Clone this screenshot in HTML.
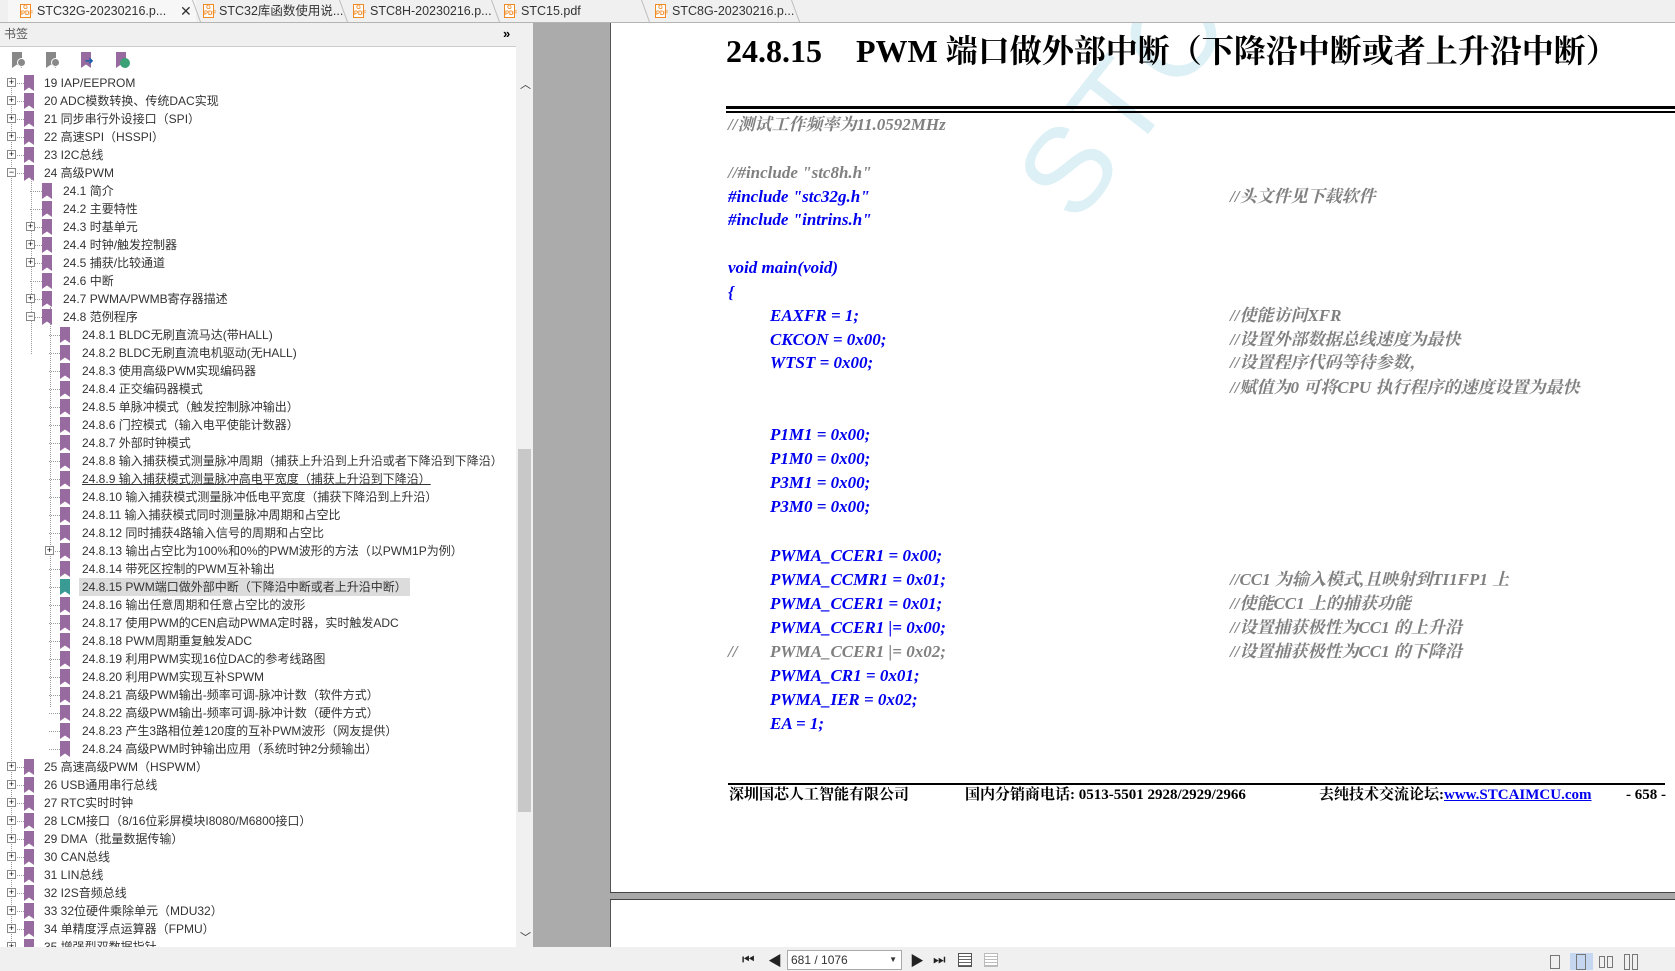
<!DOCTYPE html>
<html><head><meta charset="utf-8"><style>
*{margin:0;padding:0;box-sizing:border-box}
body{width:1675px;height:970px;overflow:hidden;background:#f0f0f0;position:relative;font-family:"Liberation Sans","Noto Sans CJK SC",sans-serif}
.abs{position:absolute}
.tabs{left:0;top:0;width:1675px;height:23px;background:#f0f0f0;border-bottom:1px solid #b4b4b4}
.tab{position:absolute;top:0;height:22px;font-size:12.5px;color:#333;line-height:22px;white-space:nowrap}
.pdf{position:absolute;top:4px;width:11px;height:14px;border:1px solid #f08a24;background:#fff;font-size:6px;color:#f08a24;line-height:6px;text-align:center;font-weight:bold}
.sep{position:absolute;top:0;width:1px;height:22px;background:#bbb;transform:skewX(20deg)}
.hdr{left:0;top:23px;width:516px;height:24px;background:#f0f0f0;border-bottom:1px solid #ccc;font-size:12px;color:#555;line-height:22px;padding-left:4px}
.tree{left:0;top:47px;width:516px;height:900px;background:#fff;overflow:hidden}
.row{position:absolute;height:18px;font-size:12px;line-height:18px;color:#333;white-space:nowrap}
.bm{position:absolute;width:10px;height:16px;background:#976b9f;clip-path:polygon(0 0,100% 0,100% 100%,50% 78%,0 100%)}
.box{position:absolute;width:9px;height:9px;border:1px solid #888;background:#fff;font-size:9px;line-height:7px;text-align:center;color:#000}
.vl{position:absolute;border-left:1px dotted #999;width:0}
.hl{position:absolute;border-top:1px dotted #999;height:0}
.page{left:610px;top:23px;width:1065px;height:869px;background:#fff;border-left:1px solid #555;overflow:hidden}
.code{position:absolute;font-family:"Liberation Serif","Noto Serif CJK SC",serif;font-weight:bold;font-style:italic;font-size:17px;color:#0000ee;white-space:nowrap;line-height:20px}
.cm{color:#808080}
</style></head><body>

<div class="abs tabs">
 <div class="tab" style="left:8px;width:188px;background:#f7f7f7"><div class="pdf" style="left:12px">G<br>PDF</div><span style="position:absolute;left:29px">STC32G-20230216.p...</span><span style="position:absolute;left:172px;font-size:14px">✕</span></div>
 <div class="sep" style="left:196px"></div>
 <div class="tab" style="left:200px"><div class="pdf" style="left:3px">G<br>PDF</div><span style="position:absolute;left:19px">STC32库函数使用说...</span></div>
 <div class="sep" style="left:343px"></div>
 <div class="tab" style="left:350px"><div class="pdf" style="left:3px">G<br>PDF</div><span style="position:absolute;left:20px">STC8H-20230216.p...</span></div>
 <div class="sep" style="left:495px"></div>
 <div class="tab" style="left:501px"><div class="pdf" style="left:3px">G<br>PDF</div><span style="position:absolute;left:20px">STC15.pdf</span></div>
 <div class="sep" style="left:645px"></div>
 <div class="tab" style="left:652px"><div class="pdf" style="left:3px">G<br>PDF</div><span style="position:absolute;left:20px">STC8G-20230216.p...</span></div>
 <div class="sep" style="left:795px"></div>
</div>

<div class="abs hdr">书签<span style="position:absolute;left:503px;top:0;font-size:13px;color:#000;font-weight:bold">»</span><span style="position:absolute;left:521px;font-size:9px;color:#000">◀</span></div>
<div class="abs" style="left:516px;top:23px;width:17px;height:24px;background:#f0f0f0"></div>

<div class="abs tree">
 <div class="bm" style="left:12px;top:5px;background:#888"></div><div class="abs" style="left:17px;top:11px;width:9px;height:9px;border-radius:50%;background:#888;border:1px solid #fff"></div>
 <div class="bm" style="left:46px;top:5px;background:#888"></div><div class="abs" style="left:51px;top:11px;width:9px;height:9px;border-radius:50%;background:#888;border:1px solid #fff"></div>
 <div class="bm" style="left:81px;top:5px"></div><div class="abs" style="left:85px;top:9px;color:#1f5fa8;font-size:10px;font-weight:bold">➔</div>
 <div class="bm" style="left:116px;top:5px"></div><div class="abs" style="left:120px;top:11px;width:10px;height:10px;border-radius:50%;background:#3aa276"></div>
 <div class="vl" style="left:11px;top:30px;height:870px"></div>
 <div class="vl" style="left:31px;top:127px;height:180px"></div>
 <div class="vl" style="left:50px;top:260px;height:400px"></div>
 <div id="rows"></div>
</div>
<div class="abs" style="left:516px;top:70px;width:17px;height:877px;background:#f0f0f0"></div>
<div class="abs" style="left:518px;top:449px;width:13px;height:363px;background:#c8c8c8"></div>
<div class="abs" style="left:520px;top:76px;font-size:11px;color:#333">︿</div>
<div class="abs" style="left:520px;top:929px;font-size:11px;color:#333">﹀</div>

<div class="abs" style="left:533px;top:23px;width:77px;height:924px;background:#ababab"></div>

<div class="abs page">
 <div class="abs" style="left:480px;top:95px;font-family:'Liberation Sans',sans-serif;font-size:120px;line-height:120px;color:#dcf0f6;transform:rotate(-52deg);transform-origin:0 100%;letter-spacing:6px">STC</div>
 <div class="abs" style="left:115px;top:3px;font-family:'Liberation Serif','Noto Serif CJK SC',serif;font-weight:bold;font-size:32px;white-space:nowrap;color:#000">24.8.15<span style="display:inline-block;width:34px"></span>PWM 端口做外部中断（下降沿中断或者上升沿中断）</div>
 <div class="abs" style="left:115px;top:83px;width:960px;height:3px;background:#000"></div>
 <div class="abs" style="left:115px;top:88px;width:960px;height:2px;background:#000"></div>
 <div class="abs" style="left:117px;top:760px;width:937px;height:2px;background:#000"></div>
 <div class="code" style="left:118px;top:762px;font-style:normal;color:#000;font-size:15px">深圳国芯人工智能有限公司</div>
 <div class="code" style="left:354px;top:762px;font-style:normal;color:#000;font-size:15px">国内分销商电话: 0513-5501 2928/2929/2966</div>
 <div class="code" style="left:708px;top:762px;font-style:normal;color:#000;font-size:15px">去纯技术交流论坛:<span style="color:#00e;text-decoration:underline">www.STCAIMCU.com</span></div>
 <div class="code" style="left:1015px;top:762px;font-style:normal;color:#000;font-size:15px">- 658 -</div>
</div>
<div id="code"></div>

<div class="abs" style="left:610px;top:892px;width:1065px;height:8px;background:#a8a8a8;border-top:1px solid #444;border-bottom:1px solid #444"></div>
<div class="abs" style="left:610px;top:900px;width:1065px;height:47px;background:#fff;border-left:1px solid #555"></div>

<div class="abs" style="left:0;top:947px;width:1675px;height:23px;background:#f0f0f0"></div>
<div class="abs" style="left:742px;top:951px;font-size:14px;color:#222;white-space:nowrap">⏮</div>
<div class="abs" style="left:768px;top:951px;font-size:14px;color:#222">◀</div>
<div class="abs" style="left:787px;top:950px;width:115px;height:20px;background:#fff;border:1px solid #aaa;font-size:12px;line-height:18px;padding-left:3px;color:#333">681 / 1076<span style="position:absolute;right:4px;font-size:8px">▼</span></div>
<div class="abs" style="left:910px;top:951px;font-size:14px;color:#222">▶</div>
<div class="abs" style="left:933px;top:951px;font-size:14px;color:#222">⏭</div>
<div class="abs" style="left:958px;top:953px;width:14px;height:14px;border:1px solid #555;background:repeating-linear-gradient(#fff 0 2px,#666 2px 3px)"></div>
<div class="abs" style="left:984px;top:953px;width:14px;height:14px;border:1px solid #bbb;background:repeating-linear-gradient(#fff 0 2px,#bbb 2px 3px)"></div>
<div class="abs" style="left:1550px;top:955px;width:10px;height:14px;border:1px solid #777"></div>
<div class="abs" style="left:1570px;top:953px;width:23px;height:17px;background:#c5d7f0"></div>
<div class="abs" style="left:1576px;top:954px;width:10px;height:16px;border:1px solid #777"></div>
<div class="abs" style="left:1599px;top:956px;width:6px;height:12px;border:1px solid #777"></div>
<div class="abs" style="left:1607px;top:956px;width:6px;height:12px;border:1px solid #777"></div>
<div class="abs" style="left:1624px;top:954px;width:6px;height:16px;border:1px solid #777"></div>
<div class="abs" style="left:1632px;top:954px;width:6px;height:16px;border:1px solid #777"></div>

<script>
var R=[[0,'+','19 IAP/EEPROM'],[0,'+','20 ADC模数转换、传统DAC实现'],[0,'+','21 同步串行外设接口（SPI）'],[0,'+','22 高速SPI（HSSPI）'],[0,'+','23 I2C总线'],[0,'−','24 高级PWM'],
[1,'','24.1 简介'],[1,'','24.2 主要特性'],[1,'+','24.3 时基单元'],[1,'+','24.4 时钟/触发控制器'],[1,'+','24.5 捕获/比较通道'],[1,'','24.6 中断'],[1,'+','24.7 PWMA/PWMB寄存器描述'],[1,'−','24.8 范例程序'],
[2,'','24.8.1 BLDC无刷直流马达(带HALL)'],[2,'','24.8.2 BLDC无刷直流电机驱动(无HALL)'],[2,'','24.8.3 使用高级PWM实现编码器'],[2,'','24.8.4 正交编码器模式'],[2,'','24.8.5 单脉冲模式（触发控制脉冲输出）'],[2,'','24.8.6 门控模式（输入电平使能计数器）'],[2,'','24.8.7 外部时钟模式'],[2,'','24.8.8 输入捕获模式测量脉冲周期（捕获上升沿到上升沿或者下降沿到下降沿）'],[2,'','24.8.9 输入捕获模式测量脉冲高电平宽度（捕获上升沿到下降沿）','u'],[2,'','24.8.10 输入捕获模式测量脉冲低电平宽度（捕获下降沿到上升沿）'],[2,'','24.8.11 输入捕获模式同时测量脉冲周期和占空比'],[2,'','24.8.12 同时捕获4路输入信号的周期和占空比'],[2,'+','24.8.13 输出占空比为100%和0%的PWM波形的方法（以PWM1P为例）'],[2,'','24.8.14 带死区控制的PWM互补输出'],[2,'','24.8.15 PWM端口做外部中断（下降沿中断或者上升沿中断）','s'],[2,'','24.8.16 输出任意周期和任意占空比的波形'],[2,'','24.8.17 使用PWM的CEN启动PWMA定时器，实时触发ADC'],[2,'','24.8.18 PWM周期重复触发ADC'],[2,'','24.8.19 利用PWM实现16位DAC的参考线路图'],[2,'','24.8.20 利用PWM实现互补SPWM'],[2,'','24.8.21 高级PWM输出-频率可调-脉冲计数（软件方式）'],[2,'','24.8.22 高级PWM输出-频率可调-脉冲计数（硬件方式）'],[2,'','24.8.23 产生3路相位差120度的互补PWM波形（网友提供）'],[2,'','24.8.24 高级PWM时钟输出应用（系统时钟2分频输出）'],
[0,'+','25 高速高级PWM（HSPWM）'],[0,'+','26 USB通用串行总线'],[0,'+','27 RTC实时时钟'],[0,'+','28 LCM接口（8/16位彩屏模块I8080/M6800接口）'],[0,'+','29 DMA（批量数据传输）'],[0,'+','30 CAN总线'],[0,'+','31 LIN总线'],[0,'+','32 I2S音频总线'],[0,'+','33 32位硬件乘除单元（MDU32）'],[0,'+','34 单精度浮点运算器（FPMU）'],[0,'+','35 增强型双数据指针']];
var h='';
R.forEach(function(r,i){var t=27+i*18,l=r[0];var bx=7+l*19,ic=24+l*18,tx=43+l*19;
 h+='<div class="hl" style="left:'+(bx+4)+'px;top:'+(t+9)+'px;width:'+(ic-bx-4)+'px"></div>';
 if(r[1])h+='<div class="box" style="left:'+bx+'px;top:'+(t+4)+'px">'+r[1]+'</div>';
 h+='<div class="bm" style="left:'+ic+'px;top:'+(t+1)+'px'+(r[3]=='s'?';background:#3a9a94':'')+'"></div>';
 h+='<div class="row" style="left:'+(tx-2)+'px;top:'+t+'px;padding:0 3px;'+(r[3]=='s'?'background:#dcdcdc;':'')+(r[3]=='u'?'text-decoration:underline;':'')+'">'+r[2]+'</div>';});
document.getElementById('rows').innerHTML=h;
var C=[[728,125,'//测试工作频率为11.0592MHz',1],[728,173,'//#include "stc8h.h"',1],[728,197,'#include "stc32g.h"'],[1230,197,'//头文件见下载软件',1],[728,220,'#include "intrins.h"'],[728,268,'void main(void)'],[728,293,'{'],
[770,316,'EAXFR = 1;'],[1230,316,'//使能访问XFR',1],[770,340,'CKCON = 0x00;'],[1230,340,'//设置外部数据总线速度为最快',1],[770,363,'WTST = 0x00;'],[1230,363,'//设置程序代码等待参数，',1],[1230,388,'//赋值为0 可将CPU 执行程序的速度设置为最快',1],
[770,435,'P1M1 = 0x00;'],[770,459,'P1M0 = 0x00;'],[770,483,'P3M1 = 0x00;'],[770,507,'P3M0 = 0x00;'],
[770,556,'PWMA_CCER1 = 0x00;'],[770,580,'PWMA_CCMR1 = 0x01;'],[1230,580,'//CC1 为输入模式,且映射到TI1FP1 上',1],[770,604,'PWMA_CCER1 = 0x01;'],[1230,604,'//使能CC1 上的捕获功能',1],[770,628,'PWMA_CCER1 |= 0x00;'],[1230,628,'//设置捕获极性为CC1 的上升沿',1],[728,652,'//',1],[770,652,'PWMA_CCER1 |= 0x02;',1],[1230,652,'//设置捕获极性为CC1 的下降沿',1],[770,676,'PWMA_CR1 = 0x01;'],[770,700,'PWMA_IER = 0x02;'],[770,724,'EA = 1;']];
var c='';C.forEach(function(k){c+='<div class="code'+(k[3]?' cm':'')+'" style="left:'+k[0]+'px;top:'+(k[1]-10)+'px">'+k[2]+'</div>';});
document.getElementById('code').innerHTML=c;
</script>
</body></html>
